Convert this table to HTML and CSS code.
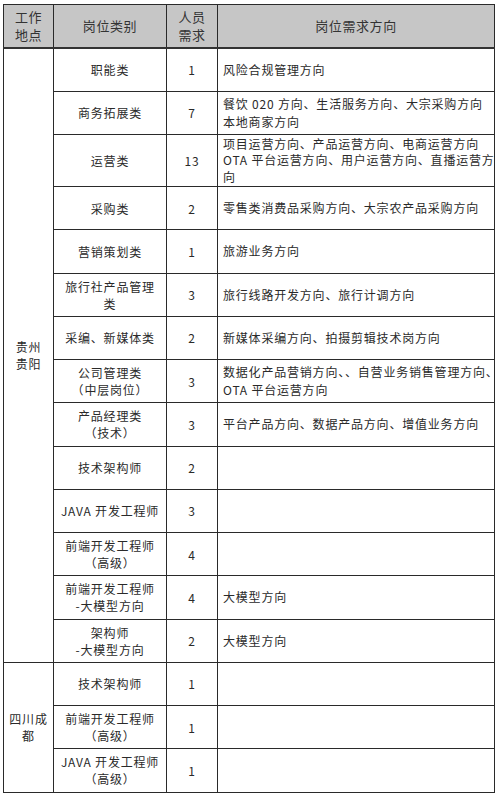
FILE: index.html
```html
<!DOCTYPE html>
<html lang="zh-CN">
<head>
<meta charset="utf-8">
<title>岗位需求</title>
<link rel="stylesheet" href="styles.css">
</head>
<body>
<table class="jobs">
  <colgroup>
    <col class="c-loc">
    <col class="c-cat">
    <col class="c-num">
    <col class="c-dir">
  </colgroup>
  <thead>
    <tr class="head">
      <th>工作<br>地点</th>
      <th>岗位类别</th>
      <th>人员<br>需求</th>
      <th>岗位需求方向</th>
    </tr>
  </thead>
  <tbody>
    <tr>
      <td class="loc" rowspan="14">贵州<br>贵阳</td>
      <td class="cat">职能类</td>
      <td class="num">1</td>
      <td class="dir">风险合规管理方向</td>
    </tr>
    <tr>
      <td class="cat">商务拓展类</td>
      <td class="num">7</td>
      <td class="dir">餐饮 020 方向、生活服务方向、大宗采购方向<br>本地商家方向</td>
    </tr>
    <tr class="tall">
      <td class="cat">运营类</td>
      <td class="num">13</td>
      <td class="dir">项目运营方向、产品运营方向、电商运营方向<br>OTA 平台运营方向、用户运营方向、直播运营方<br>向</td>
    </tr>
    <tr>
      <td class="cat">采购类</td>
      <td class="num">2</td>
      <td class="dir">零售类消费品采购方向、大宗农产品采购方向</td>
    </tr>
    <tr>
      <td class="cat">营销策划类</td>
      <td class="num">1</td>
      <td class="dir">旅游业务方向</td>
    </tr>
    <tr>
      <td class="cat">旅行社产品管理<br>类</td>
      <td class="num">3</td>
      <td class="dir">旅行线路开发方向、旅行计调方向</td>
    </tr>
    <tr>
      <td class="cat">采编、新媒体类</td>
      <td class="num">2</td>
      <td class="dir">新媒体采编方向、拍摄剪辑技术岗方向</td>
    </tr>
    <tr>
      <td class="cat">公司管理类<br>（中层岗位）</td>
      <td class="num">3</td>
      <td class="dir">数据化产品营销方向、、自营业务销售管理方向、<br>OTA 平台运营方向</td>
    </tr>
    <tr>
      <td class="cat">产品经理类<br>（技术）</td>
      <td class="num">3</td>
      <td class="dir">平台产品方向、数据产品方向、增值业务方向</td>
    </tr>
    <tr>
      <td class="cat">技术架构师</td>
      <td class="num">2</td>
      <td class="dir"></td>
    </tr>
    <tr>
      <td class="cat">JAVA 开发工程师</td>
      <td class="num">3</td>
      <td class="dir"></td>
    </tr>
    <tr>
      <td class="cat">前端开发工程师<br>（高级）</td>
      <td class="num">4</td>
      <td class="dir"></td>
    </tr>
    <tr>
      <td class="cat">前端开发工程师<br>-大模型方向</td>
      <td class="num">4</td>
      <td class="dir">大模型方向</td>
    </tr>
    <tr>
      <td class="cat">架构师<br>-大模型方向</td>
      <td class="num">2</td>
      <td class="dir">大模型方向</td>
    </tr>
    <tr>
      <td class="loc" rowspan="3">四川成都</td>
      <td class="cat">技术架构师</td>
      <td class="num">1</td>
      <td class="dir"></td>
    </tr>
    <tr>
      <td class="cat">前端开发工程师<br>（高级）</td>
      <td class="num">1</td>
      <td class="dir"></td>
    </tr>
    <tr>
      <td class="cat">JAVA 开发工程师<br>（高级）</td>
      <td class="num">1</td>
      <td class="dir"></td>
    </tr>
  </tbody>
</table>
</body>
</html>
```

FILE: styles.css
```css
html, body {
  margin: 0;
  padding: 0;
  background: #ffffff;
}

body {
  font-family: "Noto Sans CJK SC", "Noto Sans", sans-serif;
  color: #2a2a2a;
}

.jobs {
  margin: 4px 0 0 3px;
  width: 491px;
  border-collapse: collapse;
  table-layout: fixed;
  border: 1.5px solid #222;
}

.c-loc { width: 50px; }
.c-cat { width: 113px; }
.c-num { width: 51px; }
.c-dir { width: 277px; }

.jobs th,
.jobs td {
  border: 1px solid #2a2a2a;
  padding: 0 3px;
  vertical-align: middle;
  text-align: center;
  font-size: 12px;
  line-height: 17px;
  letter-spacing: 0.8px;
  font-weight: 400;
}

.head th {
  height: 42px;
  background: #c6c6c6;
  font-size: 13px;
  letter-spacing: 0.6px;
  line-height: 18px;
  color: #333;
  border-bottom: 2px solid #333;
}

.jobs tbody tr {
  height: 43.25px;
}

.jobs tbody tr.tall {
  height: 52px;
}

.jobs td.loc {
  padding: 0 4px;
  line-height: 17px;
}

.jobs td.dir {
  text-align: left;
  padding: 0 4px 0 5px;
  white-space: nowrap;
  line-height: 18px;
}

.jobs tr.tall td.dir {
  line-height: 16.5px;
}
```
